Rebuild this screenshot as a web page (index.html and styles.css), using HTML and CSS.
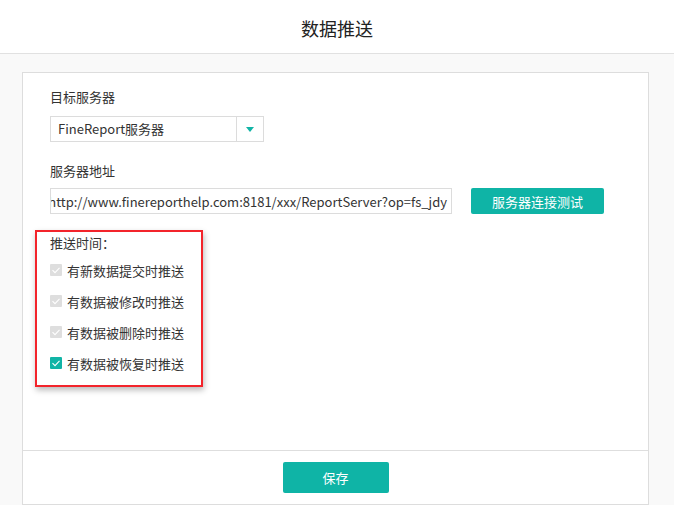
FILE: index.html
```
<!DOCTYPE html>
<html lang="zh-CN">
<head>
<meta charset="utf-8">
<title>数据推送</title>
<link rel="stylesheet" href="styles.css">
</head>
<body>
<div class="header">数据推送</div>
<div class="card">
  <div class="card-body">
    <div class="label">目标服务器</div>
    <div class="select">
      <div class="select-value">FineReport服务器</div>
      <div class="select-arrow"><span class="tri"></span></div>
    </div>
    <div class="label label-2">服务器地址</div>
    <div class="row">
      <div class="input"><span>http://www.finereporthelp.com:8181/xxx/ReportServer?op=fs_jdy</span></div>
      <div class="btn btn-test">服务器连接测试</div>
    </div>
    <div class="highlight">
      <div class="label">推送时间：</div>
      <div class="checks">
        <div class="check"><span class="box disabled"><svg viewBox="0 0 12 12"><polyline points="2.5,6.2 5,8.6 9.5,3.8"/></svg></span><span>有新数据提交时推送</span></div>
        <div class="check"><span class="box disabled"><svg viewBox="0 0 12 12"><polyline points="2.5,6.2 5,8.6 9.5,3.8"/></svg></span><span>有数据被修改时推送</span></div>
        <div class="check"><span class="box disabled"><svg viewBox="0 0 12 12"><polyline points="2.5,6.2 5,8.6 9.5,3.8"/></svg></span><span>有数据被删除时推送</span></div>
        <div class="check"><span class="box checked"><svg viewBox="0 0 12 12"><polyline points="2.5,6.2 5,8.6 9.5,3.8"/></svg></span><span>有数据被恢复时推送</span></div>
      </div>
    </div>
  </div>
  <div class="footer">
    <div class="btn btn-save">保存</div>
  </div>
</div>
</body>
</html>
```
FILE: styles.css
```
* { box-sizing: border-box; }
html, body { margin: 0; padding: 0; }
body {
  width: 674px;
  height: 505px;
  overflow: hidden;
  background: #f9f9f9;
  font-family: "Noto Sans CJK SC", "Noto Sans", sans-serif;
  color: #333;
  font-size: 13px;
}
.header {
  height: 54px;
  background: #fff;
  border-bottom: 1px solid #e1e1e1;
  display: flex;
  align-items: center;
  justify-content: center;
  font-size: 18px;
  color: #222;
  padding-top: 2px;
}
.card {
  margin: 18px 0 0 22px;
  width: 627px;
  height: 433px;
  background: #fff;
  border: 1px solid #dddddd;
  display: flex;
  flex-direction: column;
}
.card-body {
  flex: 1;
  padding: 14px 0 0 27px;
}
.label {
  line-height: 20px;
  font-size: 13px;
  color: #333;
}
.label-2 { margin-top: 19px; }
.select {
  margin-top: 9px;
  width: 214px;
  height: 26px;
  border: 1px solid #dcdcdc;
  display: flex;
}
.select-value {
  flex: 1;
  padding-left: 7px;
  line-height: 24px;
  border-right: 1px solid #dcdcdc;
}
.select-arrow {
  width: 26px;
  display: flex;
  align-items: center;
  justify-content: center;
}
.tri {
  width: 0;
  height: 0;
  border-left: 4px solid transparent;
  border-right: 4px solid transparent;
  border-top: 5px solid #11b4a6;
  margin-top: 1px;
}
.row {
  margin-top: 7px;
  display: flex;
  gap: 19px;
}
.input {
  width: 402px;
  height: 26px;
  border: 1px solid #dcdcdc;
  display: flex;
  justify-content: flex-end;
  align-items: center;
  overflow: hidden;
  white-space: nowrap;
  padding-right: 4px;
  font-size: 13px;
}
.input span { flex: none; }
.btn {
  background: #0fb4a6;
  color: #fff;
  border-radius: 2px;
  display: flex;
  align-items: center;
  justify-content: center;
  font-size: 13px;
}
.btn-test {
  width: 133px;
  height: 26px;
}
.highlight {
  margin-top: 16px;
  margin-left: -15px;
  width: 168px;
  height: 157px;
  border: 2px solid #f3242b;
  box-shadow: 1px 3px 6px rgba(0, 0, 0, 0.28);
  padding: 1px 0 0 13px;
}
.checks {
  margin-top: 7px;
  display: flex;
  flex-direction: column;
  gap: 11px;
}
.check {
  display: flex;
  align-items: center;
  height: 20px;
  gap: 5px;
}
.box {
  width: 12px;
  height: 12px;
  border-radius: 1px;
  display: flex;
}
.box svg {
  width: 12px;
  height: 12px;
  fill: none;
  stroke: #fff;
  stroke-width: 1.1;
}
.box.disabled { background: #dedede; }
.box.checked { background: #11b4a6; }
.footer {
  height: 54px;
  border-top: 1px solid #dedede;
  display: flex;
  justify-content: center;
  padding-top: 11px;
}
.btn-save {
  width: 106px;
  height: 31px;
}
```
